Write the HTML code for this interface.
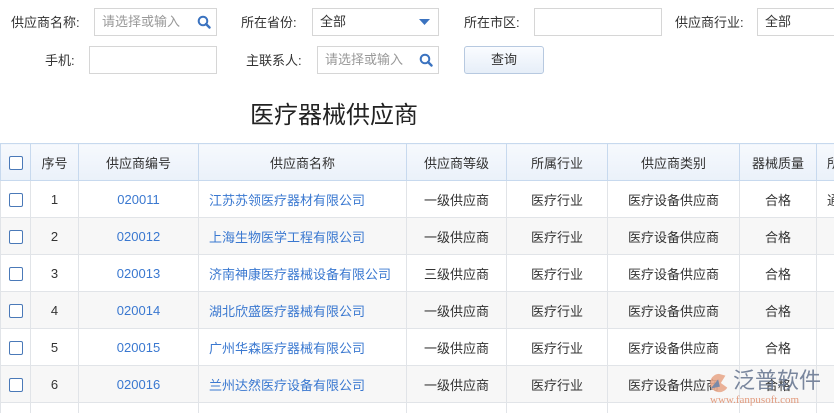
<!DOCTYPE html>
<html><head><meta charset="utf-8"><style>
html,body{margin:0;width:834px;height:415px;overflow:hidden}
body{background:#fff;font-family:"Liberation Sans","Noto Sans CJK SC",sans-serif;font-size:13px;color:#333;position:relative}
.a{position:absolute}
.lbl{position:absolute;font-size:13px;color:#333;line-height:16px}
.inp{position:absolute;border:1px solid #d6d6d6;box-sizing:border-box;height:28px;background:#fff;font-size:13px;line-height:26px;padding-left:7px}
.ph{color:#999}
table{position:absolute;left:0;top:143px;border-collapse:collapse;table-layout:fixed;width:850px}
th,td{border:1px solid #e1e4e8;text-align:center;height:36px;padding:0;white-space:nowrap;overflow:hidden;font-weight:normal;font-size:13px}
th{background:linear-gradient(#f6f9fd,#eaf1fa);border-color:#c7d9ee;color:#333}
tr.g td{background:#f7f7f7}
tr.s td{height:10px;border-bottom:none}
td.l{color:#3a78d0}
td.n{text-align:left;padding-left:10px;color:#3a78d0}
.cb{display:inline-block;width:12px;height:12px;border:1px solid #4a79b8;border-radius:2px;vertical-align:middle;background:#fff}
</style></head><body>
<div class="lbl" style="left:11px;top:15px">供应商名称:</div>
<div class="inp" style="left:94px;top:8px;width:123px"><span class="ph">请选择或输入</span>
<svg class="a" style="right:5px;top:6px" width="14" height="14" viewBox="0 0 14 14"><circle cx="6" cy="6" r="4.3" fill="none" stroke="#3b73c0" stroke-width="2"/><path d="M9 9l3.5 3.5" stroke="#3b73c0" stroke-width="2.4" stroke-linecap="round"/></svg></div>
<div class="lbl" style="left:241px;top:15px">所在省份:</div>
<div class="inp" style="left:312px;top:8px;width:127px">全部<svg class="a" style="right:8px;top:10px" width="11" height="7"><path d="M0 0h11L5.5 6z" fill="#3b73c0"/></svg></div>
<div class="lbl" style="left:464px;top:15px">所在市区:</div>
<div class="inp" style="left:534px;top:8px;width:128px"></div>
<div class="lbl" style="left:675px;top:15px">供应商行业:</div>
<div class="inp" style="left:757px;top:8px;width:90px">全部</div>
<div class="lbl" style="left:45px;top:53px">手机:</div>
<div class="inp" style="left:89px;top:46px;width:128px"></div>
<div class="lbl" style="left:246px;top:53px">主联系人:</div>
<div class="inp" style="left:317px;top:46px;width:122px"><span class="ph">请选择或输入</span>
<svg class="a" style="right:5px;top:6px" width="14" height="14" viewBox="0 0 14 14"><circle cx="6" cy="6" r="4.3" fill="none" stroke="#3b73c0" stroke-width="2"/><path d="M9 9l3.5 3.5" stroke="#3b73c0" stroke-width="2.4" stroke-linecap="round"/></svg></div>
<div class="a" style="left:464px;top:46px;width:80px;height:28px;box-sizing:border-box;border:1px solid #b7c9e0;border-radius:3px;background:linear-gradient(#fafcff,#e6eef8);text-align:center;line-height:26px">查询</div>
<div class="a" style="left:250px;top:101px;font-size:24px;color:#222;line-height:30px">医疗器械供应商</div>
<table>
<colgroup><col style="width:30px"><col style="width:48px"><col style="width:120px"><col style="width:208px"><col style="width:100px"><col style="width:101px"><col style="width:132px"><col style="width:77px"><col style="width:34px"></colgroup>
<tr><th><span class="cb"></span></th><th>序号</th><th>供应商编号</th><th>供应商名称</th><th>供应商等级</th><th>所属行业</th><th>供应商类别</th><th>器械质量</th><th>所</th></tr>
<tr><td><span class="cb"></span></td><td>1</td><td class="l">020011</td><td class="n">江苏苏领医疗器材有限公司</td><td>一级供应商</td><td>医疗行业</td><td>医疗设备供应商</td><td>合格</td><td>通</td></tr>
<tr class="g"><td><span class="cb"></span></td><td>2</td><td class="l">020012</td><td class="n">上海生物医学工程有限公司</td><td>一级供应商</td><td>医疗行业</td><td>医疗设备供应商</td><td>合格</td><td></td></tr>
<tr><td><span class="cb"></span></td><td>3</td><td class="l">020013</td><td class="n">济南神康医疗器械设备有限公司</td><td>三级供应商</td><td>医疗行业</td><td>医疗设备供应商</td><td>合格</td><td></td></tr>
<tr class="g"><td><span class="cb"></span></td><td>4</td><td class="l">020014</td><td class="n">湖北欣盛医疗器械有限公司</td><td>一级供应商</td><td>医疗行业</td><td>医疗设备供应商</td><td>合格</td><td></td></tr>
<tr><td><span class="cb"></span></td><td>5</td><td class="l">020015</td><td class="n">广州华森医疗器械有限公司</td><td>一级供应商</td><td>医疗行业</td><td>医疗设备供应商</td><td>合格</td><td></td></tr>
<tr class="g"><td><span class="cb"></span></td><td>6</td><td class="l">020016</td><td class="n">兰州达然医疗设备有限公司</td><td>一级供应商</td><td>医疗行业</td><td>医疗设备供应商</td><td>合格</td><td></td></tr>
<tr class="s"><td></td><td></td><td></td><td></td><td></td><td></td><td></td><td></td><td></td></tr>
</table>
<svg class="a" style="left:707px;top:372px" width="24" height="22" viewBox="0 0 26 24"><path d="M13 2A10 10 0 1 0 22 17L15 12 20 4Z" fill="#e8a88c" opacity=".9"/><path d="M4 18L12 8 14 16Z" fill="#7a8aa8"/></svg>
<div class="a" style="left:733px;top:369px;font-size:22px;color:#6c7a94;line-height:24px;opacity:.9">泛普软件</div>
<div class="a" style="left:710px;top:394px;font-size:11px;color:#e29a7c;font-family:'Liberation Serif',serif;line-height:13px">www.fanpusoft.com</div>
</body></html>
